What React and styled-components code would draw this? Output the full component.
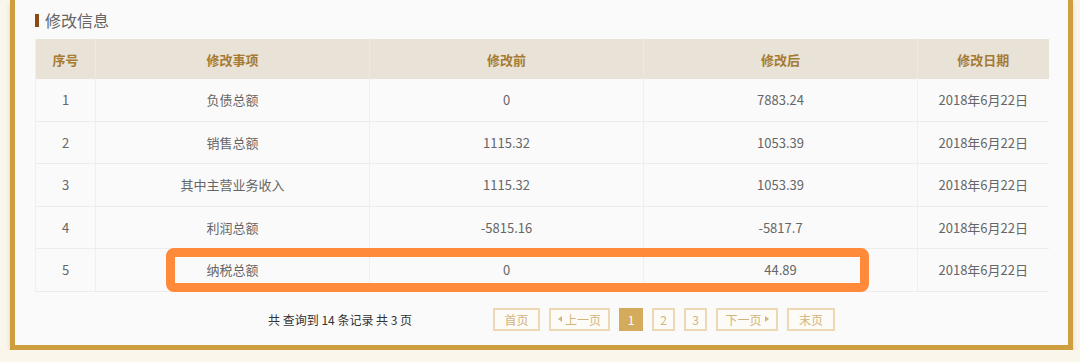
import React from "react";
import styled, { createGlobalStyle } from "styled-components";

const Global = createGlobalStyle`
  html, body { margin: 0; padding: 0; background: #faf6ec; }
  body { font-family: "Noto Sans CJK SC", "Noto Sans", sans-serif; }
`;

const Card = styled.div`
  margin: 0 7px 0 10px;
  background: #fafafa;
  border: 5px solid #cf9e3f;
  border-top: none;
  height: 350px;
  box-sizing: border-box;
  padding: 10px 20px 0 20px;
  box-shadow: 0 3px 5px rgba(0, 0, 0, 0.12);
`;

const Title = styled.div`
  display: flex;
  align-items: center;
  height: 20px;
  font-size: 16px;
  color: #666;
  gap: 6px;
  &::before {
    content: "";
    width: 4px;
    height: 13px;
    background: #8a4a12;
  }
`;

const TableWrap = styled.div`
  position: relative;
  margin-top: 9px;
`;

const Table = styled.table`
  width: 1013px;
  border-collapse: collapse;
  table-layout: fixed;
  font-size: 13px;
  color: #666;
  border-left: 1px solid #efefef;
`;

const Th = styled.th`
  height: 40px;
  padding: 0;
  background: #e8e2d7;
  color: #a57b33;
  font-weight: bold;
  font-size: 13px;
  text-align: center;
  border-right: 1px solid #efe9df;
  &:last-child { border-right: none; }
`;

const Td = styled.td`
  height: 41.5px;
  padding: 0;
  text-align: center;
  border-bottom: 1px solid #ececec;
  border-right: 1px solid #efefef;
  &:last-child { border-right: none; }
`;

const Highlight = styled.div`
  position: absolute;
  left: 131px;
  top: 209px;
  width: 703px;
  height: 44px;
  box-sizing: border-box;
  border: 9px solid #ff8b3a;
  border-radius: 8px;
  pointer-events: none;
`;

const Footer = styled.div`
  display: flex;
  align-items: center;
  margin-top: 16px;
  height: 23px;
`;

const Info = styled.div`
  font-size: 12px;
  color: #333;
  margin-left: 233px;
  width: 225px;
  white-space: nowrap;
`;

const Pager = styled.div`
  display: flex;
  gap: 9px;
`;

const PageBtn = styled.div`
  box-sizing: border-box;
  height: 23px;
  min-width: ${(p) => p.$w}px;
  padding: 0 6px;
  border: 2px solid ${(p) => (p.$active ? "#d4aa5c" : "#ecd9b3")};
  background: ${(p) => (p.$active ? "#d4aa5c" : "#fdfbf7")};
  color: ${(p) => (p.$active ? "#fff" : "#d2b47c")};
  font-size: 12px;
  display: flex;
  align-items: center;
  justify-content: center;
  gap: 3px;
`;

const Tri = styled.span`
  width: 0;
  height: 0;
  border-top: 3px solid transparent;
  border-bottom: 3px solid transparent;
  ${(p) => (p.$dir === "left" ? "border-right: 4px solid #d2b47c;" : "border-left: 4px solid #d2b47c;")}
`;

const rows = [
  ["1", "负债总额", "0", "7883.24", "2018年6月22日"],
  ["2", "销售总额", "1115.32", "1053.39", "2018年6月22日"],
  ["3", "其中主营业务收入", "1115.32", "1053.39", "2018年6月22日"],
  ["4", "利润总额", "-5815.16", "-5817.7", "2018年6月22日"],
  ["5", "纳税总额", "0", "44.89", "2018年6月22日"],
];

export default function App() {
  return (
    <>
      <Global />
      <Card>
        <Title>修改信息</Title>
        <TableWrap>
          <Table>
            <colgroup>
              <col style={{ width: 60 }} />
              <col style={{ width: 274 }} />
              <col style={{ width: 274 }} />
              <col style={{ width: 274 }} />
              <col style={{ width: 131 }} />
            </colgroup>
            <thead>
              <tr>
                <Th>序号</Th>
                <Th>修改事项</Th>
                <Th>修改前</Th>
                <Th>修改后</Th>
                <Th>修改日期</Th>
              </tr>
            </thead>
            <tbody>
              {rows.map((r) => (
                <tr key={r[0]}>
                  {r.map((c, i) => (
                    <Td key={i}>{c}</Td>
                  ))}
                </tr>
              ))}
            </tbody>
          </Table>
          <Highlight />
        </TableWrap>
        <Footer>
          <Info>共 查询到 14 条记录 共 3 页</Info>
          <Pager>
            <PageBtn $w={47}>首页</PageBtn>
            <PageBtn $w={61}><Tri $dir="left" />上一页</PageBtn>
            <PageBtn $w={24} $active>1</PageBtn>
            <PageBtn $w={23}>2</PageBtn>
            <PageBtn $w={23}>3</PageBtn>
            <PageBtn $w={62}>下一页<Tri $dir="right" /></PageBtn>
            <PageBtn $w={48}>末页</PageBtn>
          </Pager>
        </Footer>
      </Card>
    </>
  );
}
